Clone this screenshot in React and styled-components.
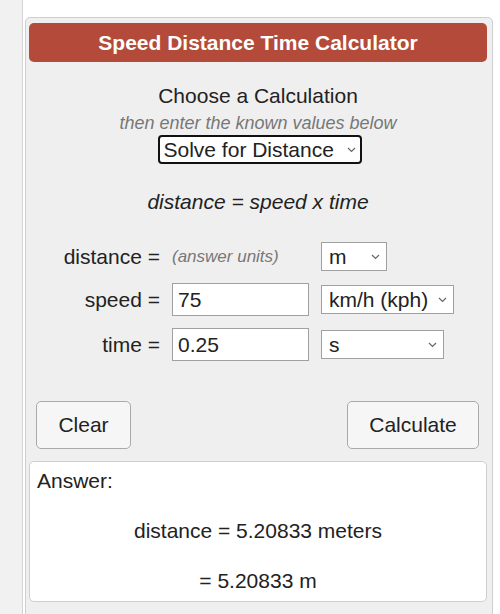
import React, { useState } from 'react';
import styled, { createGlobalStyle } from 'styled-components';

const COLORS = {
  header: '#b34a3a',
  panel: '#efefef',
  border: '#cfcfcf',
  text: '#222',
  muted: '#777',
};

const GlobalStyle = createGlobalStyle`
  body {
    margin: 0;
    background: #fff;
    font-family: "Liberation Sans", Arial, sans-serif;
    color: ${COLORS.text};
  }
`;

const SPage = styled.div`
  display: flex;
  height: 614px;
  overflow: hidden;
`;
const SSidebar = styled.div`
  width: 22px;
  flex-shrink: 0;
  background: #f1f1f1;
  border-right: 1px solid #d4d4d4;
`;
const SMain = styled.div`
  flex: 1;
  padding: 17px 7px 0 2px;
`;
const SPanel = styled.div`
  background: ${COLORS.panel};
  border: 1px solid ${COLORS.border};
  border-radius: 5px;
  padding: 5px 5px 30px 3px;
  min-height: 640px;
`;
const SHeader = styled.div`
  background: ${COLORS.header};
  color: #fff;
  border-radius: 5px;
  height: 39px;
  display: flex;
  align-items: center;
  justify-content: center;
  font-weight: bold;
  font-size: 21px;
`;
const SChoose = styled.div`
  text-align: center;
  font-size: 21px;
  margin-top: 22px;
  line-height: 24px;
`;
const SHint = styled.div`
  text-align: center;
  font-size: 18px;
  font-style: italic;
  color: ${COLORS.muted};
  margin-top: 5px;
  line-height: 20px;
`;
const SCenter = styled.div`
  display: flex;
  justify-content: center;
  margin-top: 2px;
`;
const SSelectWrap = styled.div`
  position: relative;
  display: inline-flex;
  justify-self: start;
  margin-left: ${(p) => p.$ml || 0}px;
`;
const SChevron = styled.svg`
  position: absolute;
  right: ${(p) => p.$r}px;
  top: 50%;
  margin-top: -3px;
  width: 9px;
  height: 6px;
  pointer-events: none;
`;
const SModeSelect = styled.select`
  appearance: none;
  font-family: inherit;
  font-size: 21px;
  height: 29px;
  width: 204px;
  border: 2px solid #111;
  border-radius: 4px;
  background: #fff;
  color: ${COLORS.text};
  padding: 0 4px;
  outline: none;
`;
const SFormula = styled.div`
  text-align: center;
  font-size: 21px;
  font-style: italic;
  margin-top: 26px;
  line-height: 24px;
`;
const SGrid = styled.div`
  display: grid;
  grid-template-columns: 131px 137px auto;
  grid-template-rows: 29px 33px 33px;
  column-gap: 12px;
  row-gap: 12px;
  align-items: center;
  margin-top: 28px;
`;
const SLabel = styled.div`
  text-align: right;
  font-size: 21px;
`;
const SUnitsNote = styled.div`
  font-size: 17px;
  font-style: italic;
  color: ${COLORS.muted};
`;
const SInput = styled.input`
  font-family: inherit;
  font-size: 21px;
  height: 33px;
  box-sizing: border-box;
  width: 137px;
  border: 1px solid #a0a0a0;
  background: #fff;
  color: ${COLORS.text};
  padding: 0 5px;
  outline: none;
`;
const SUnitSelect = styled.select`
  appearance: none;
  font-family: inherit;
  font-size: 21px;
  height: 29px;
  width: ${(p) => p.$w}px;
  border: 1px solid #a0a0a0;
  border-radius: 0;
  background: #fff;
  color: ${COLORS.text};
  padding: 0 7px;
  outline: none;
`;
const SButtons = styled.div`
  display: flex;
  justify-content: space-between;
  padding: 0 8px 0 7px;
  margin-top: 40px;
`;
const SButton = styled.button`
  font-family: inherit;
  font-size: 21px;
  color: ${COLORS.text};
  background: #f6f6f6;
  border: 1px solid #aaa;
  border-radius: 5px;
  height: 48px;
  width: ${(p) => p.$w}px;
  cursor: pointer;
`;
const SAnswer = styled.div`
  background: #fff;
  border: 1px solid ${COLORS.border};
  border-radius: 5px;
  margin-top: 12px;
  height: 141px;
  padding: 7px 7px;
  box-sizing: border-box;
  font-size: 21px;
  line-height: 24px;
`;
const SAnswerLine = styled.div`
  text-align: center;
  margin-top: 26px;
`;

const Chevron = ({ right = 8 }) => (
  <SChevron $r={right} viewBox="0 0 9 6">
    <path d="M1 1l3.5 3.5L8 1" fill="none" stroke="#666" strokeWidth="1.2" />
  </SChevron>
);

const UnitSelect = ({ width, options, defaultValue }) => (
  <SSelectWrap>
    <SUnitSelect $w={width} defaultValue={defaultValue}>
      {options.map((o) => (
        <option key={o} value={o}>
          {o}
        </option>
      ))}
    </SUnitSelect>
    <Chevron right={7} />
  </SSelectWrap>
);

const App = () => {
  const [mode, setMode] = useState('d');
  const [speed, setSpeed] = useState('75');
  const [time, setTime] = useState('0.25');

  return (
    <SPage>
      <GlobalStyle />
      <SSidebar />
      <SMain>
        <SPanel>
          <SHeader>Speed Distance Time Calculator</SHeader>
          <SChoose>Choose a Calculation</SChoose>
          <SHint>then enter the known values below</SHint>
          <SCenter>
            <SSelectWrap $ml={3}>
              <SModeSelect value={mode} onChange={(e) => setMode(e.target.value)}>
                <option value="d">Solve for Distance</option>
                <option value="s">Solve for Speed</option>
                <option value="t">Solve for Time</option>
              </SModeSelect>
              <Chevron right={6} />
            </SSelectWrap>
          </SCenter>
          <SFormula>distance = speed x time</SFormula>
          <SGrid>
            <SLabel>distance =</SLabel>
            <SUnitsNote>(answer units)</SUnitsNote>
            <UnitSelect width={66} defaultValue="m" options={['m', 'km', 'mi', 'ft']} />
            <SLabel>speed =</SLabel>
            <SInput value={speed} onChange={(e) => setSpeed(e.target.value)} />
            <UnitSelect width={133} defaultValue="km/h (kph)" options={['km/h (kph)', 'm/s', 'mph']} />
            <SLabel>time =</SLabel>
            <SInput value={time} onChange={(e) => setTime(e.target.value)} />
            <UnitSelect width={123} defaultValue="s" options={['s', 'min', 'h']} />
          </SGrid>
          <SButtons>
            <SButton $w={95}>Clear</SButton>
            <SButton $w={132}>Calculate</SButton>
          </SButtons>
          <SAnswer>
            <div>Answer:</div>
            <SAnswerLine>distance = 5.20833 meters</SAnswerLine>
            <SAnswerLine>= 5.20833 m</SAnswerLine>
          </SAnswer>
        </SPanel>
      </SMain>
    </SPage>
  );
};

export default App;
